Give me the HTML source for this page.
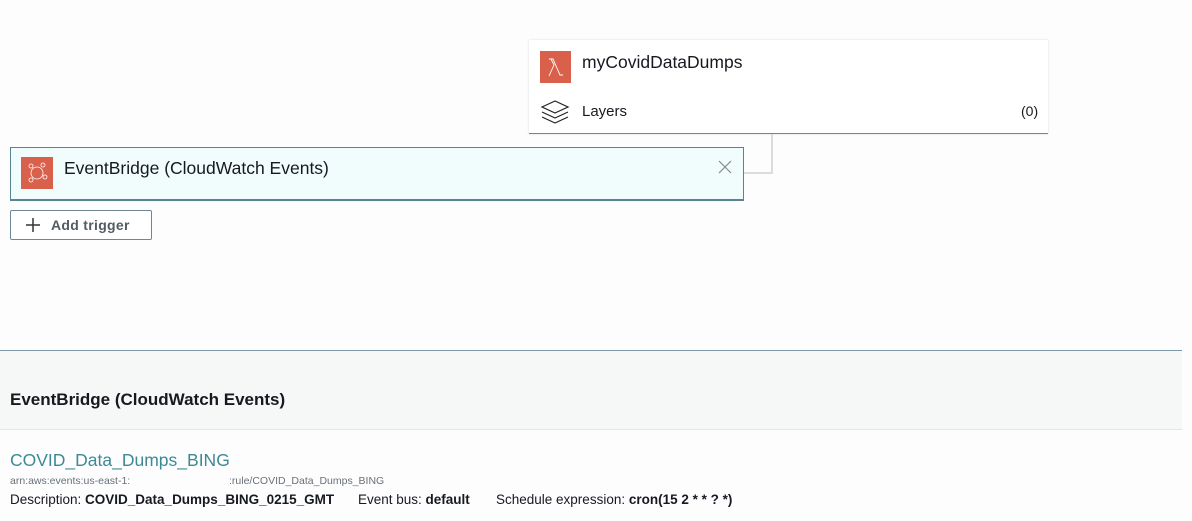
<!DOCTYPE html>
<html><head><style>
body{margin:0;width:1192px;height:521px;background:#fdfdfe;font-family:"Liberation Sans",sans-serif;position:relative;overflow:hidden;color:#16191f}
.abs{position:absolute}
</style></head><body>
<div class="abs" style="left:529px;top:40px;width:519px;height:93px;background:#fff;border-bottom:1px solid #6d8797;box-shadow:0 0 2px rgba(0,0,0,.15)"></div>
<div class="abs" style="left:540px;top:51px;width:31px;height:32px;background:#d9604a">
<svg width="31" height="32"><path d="M9 25 L14 14 L11 8 L9 8 M11 8 L13 8 L20 24 L23 24" stroke="#fff" stroke-width="0.9" fill="none"/></svg></div>
<div class="abs" style="left:582px;top:52px;font-size:17.5px">myCovidDataDumps</div>
<svg class="abs" style="left:540px;top:99px" width="32" height="28"><g stroke="#222" stroke-width="1.2" fill="none"><path d="M2 8 L15 2 L28 8 L15 14 Z"/><path d="M2 13 L15 19 L28 13"/><path d="M2 18 L15 24 L28 18"/></g></svg>
<div class="abs" style="left:582px;top:103px;font-size:15px">Layers</div>
<div class="abs" style="left:1021px;top:103px;font-size:14px">(0)</div>
<div class="abs" style="left:771px;top:134px;width:2px;height:40px;background:#dadcdd"></div>
<div class="abs" style="left:744px;top:172px;width:29px;height:2px;background:#dadcdd"></div>
<div class="abs" style="left:10px;top:147px;width:732px;height:51px;background:#f1fcfd;border:1px solid #5a8494;border-bottom-width:2px"></div>
<div class="abs" style="left:21px;top:157px;width:32px;height:32px;background:#d9604a">
<svg width="32" height="32"><g stroke="#fff" stroke-width="0.8" fill="none"><circle cx="16" cy="16" r="6"/><circle cx="10" cy="9" r="2"/><circle cx="22" cy="8" r="2"/><circle cx="24" cy="20" r="2"/><circle cx="10" cy="23" r="2"/></g></svg></div>
<div class="abs" style="left:64px;top:158px;font-size:17.5px">EventBridge (CloudWatch Events)</div>
<svg class="abs" style="left:718px;top:160px" width="14" height="14"><path d="M1 1L13 13M13 1L1 13" stroke="#888" stroke-width="1.2"/></svg>
<div class="abs" style="left:10px;top:210px;width:140px;height:28px;border:1px solid #6d8797;border-radius:2px;background:#fff"></div>
<svg class="abs" style="left:26px;top:218px" width="14" height="14"><path d="M7 0V14M0 7H14" stroke="#333" stroke-width="1.5"/></svg>
<div class="abs" style="left:51px;top:217px;font-size:14px;font-weight:bold;color:#545b64;letter-spacing:.3px">Add trigger</div>
<div class="abs" style="left:0;top:350px;width:1182px;height:1px;background:#7a9aa8"></div>
<div class="abs" style="left:0;top:351px;width:1182px;height:78px;background:#f6f7f7;border-bottom:1px solid #e4e6e8"></div>
<div class="abs" style="left:10px;top:390px;font-size:17px;font-weight:bold">EventBridge (CloudWatch Events)</div>
<div class="abs" style="left:10px;top:450px;font-size:17.5px;color:#3d8a94">COVID_Data_Dumps_BING</div>
<div class="abs" style="left:10px;top:475px;font-size:10.5px;color:#687078">arn:aws:events:us-east-1:</div>
<div class="abs" style="left:229px;top:475px;font-size:10.5px;color:#687078">:rule/COVID_Data_Dumps_BING</div>
<div class="abs" style="left:10px;top:492px;font-size:13.5px;white-space:nowrap">Description: <b>COVID_Data_Dumps_BING_0215_GMT</b></div>
<div class="abs" style="left:358px;top:492px;font-size:13.5px;white-space:nowrap">Event bus: <b>default</b></div>
<div class="abs" style="left:496px;top:492px;font-size:13.5px;white-space:nowrap">Schedule expression: <b>cron(15 2 * * ? *)</b></div>
</body></html>
